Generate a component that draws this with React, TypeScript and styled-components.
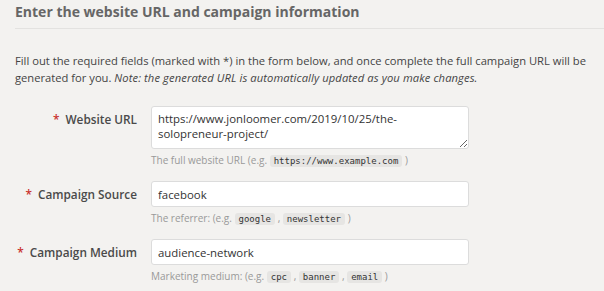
import React from 'react';
import styled, { createGlobalStyle } from 'styled-components';

const GlobalStyle = createGlobalStyle`
    html, body {
        margin: 0;
        padding: 0;
        background: #f3f2f0;
        overflow: hidden;
    }
    body {
        font-family: "Open Sans", "DejaVu Sans", sans-serif;
        color: #444;
    }
`;

const Page = styled.div`
    padding: 2px 0 0 15px;
    width: 620px;
`;

const Heading = styled.h2`
    margin: 0;
    padding-bottom: 6px;
    font-size: 14px;
    line-height: 20px;
    font-weight: 700;
    color: #666;
    border-bottom: 1px solid #e3e2e0;
`;

const Intro = styled.p`
    width: 590px;
    margin: 24px 0 20px;
    font-size: 11.2px;
    line-height: 16.5px;
    color: #444;
    em {
        font-style: italic;
        letter-spacing: 0.1px;
    }
`;

const Form = styled.div`
    display: flex;
    flex-direction: column;
    gap: 14px;
`;

const Row = styled.div`
    display: grid;
    grid-template-columns: 122px 318px;
    column-gap: 14px;
`;

const Label = styled.label`
    text-align: right;
    white-space: nowrap;
    font-size: 11.8px;
    font-weight: 600;
    color: #4a4a4a;
    line-height: 26px;
    &::before {
        content: '*';
        color: #c9302c;
        margin-right: 6px;
    }
`;

const Field = styled.div`
    display: flex;
    flex-direction: column;
    gap: 4px;
`;

const Input = styled.input`
    box-sizing: border-box;
    width: 318px;
    height: 26px;
    padding: 0 6px;
    border: 1px solid #dcdcdc;
    border-radius: 3px;
    background: #fff;
    font-family: inherit;
    font-size: 11.4px;
    color: #333;
    outline: none;
`;

const TextArea = styled.textarea`
    box-sizing: border-box;
    width: 318px;
    height: 43px;
    padding: 4px 6px;
    border: 1px solid #dcdcdc;
    border-radius: 3px;
    background: #fff;
    font-family: inherit;
    font-size: 11.4px;
    line-height: 15px;
    color: #333;
    resize: vertical;
    outline: none;
    overflow: hidden;
    display: block;
`;

const Help = styled.div`
    height: 14px;
    font-size: 10px;
    line-height: 14px;
    color: #999;
`;

const Code = styled.code`
    font-family: "DejaVu Sans Mono", "Liberation Mono", monospace;
    font-size: 9px;
    line-height: 10px;
    color: #333;
    background: #e6e5e3;
    border-radius: 3px;
    padding: 1px 4px;
`;

const fields = [
    {
        label: 'Campaign Source',
        value: 'facebook',
        help: 'The referrer:',
        codes: ['google', 'newsletter'],
    },
    {
        label: 'Campaign Medium',
        value: 'audience-network',
        help: 'Marketing medium:',
        codes: ['cpc', 'banner', 'email'],
    },
];

const Examples = ({ codes }: { codes: string[] }) => (
    <>
        (e.g.{' '}
        {codes.map((c, i) => (
            <React.Fragment key={c}>
                {i > 0 && ' , '}
                <Code>{c}</Code>
            </React.Fragment>
        ))}{' '}
        )
    </>
);

const App = () => {
    return (
        <>
            <GlobalStyle />
            <Page>
                <Heading>Enter the website URL and campaign information</Heading>
                <Intro>
                    Fill out the required fields (marked with *) in the form below, and once complete the full
                    campaign URL will be generated for you.{' '}
                    <em>Note: the generated URL is automatically updated as you make changes.</em>
                </Intro>
                <Form>
                    <Row>
                        <Label>Website URL</Label>
                        <Field>
                            <TextArea
                                readOnly
                                value="https://www.jonloomer.com/2019/10/25/the-solopreneur-project/"
                            />
                            <Help>
                                The full website URL <Examples codes={['https://www.example.com']} />
                            </Help>
                        </Field>
                    </Row>
                    {fields.map((f) => (
                        <Row key={f.label}>
                            <Label>{f.label}</Label>
                            <Field>
                                <Input readOnly value={f.value} />
                                <Help>
                                    {f.help} <Examples codes={f.codes} />
                                </Help>
                            </Field>
                        </Row>
                    ))}
                </Form>
            </Page>
        </>
    );
};

export default App;
